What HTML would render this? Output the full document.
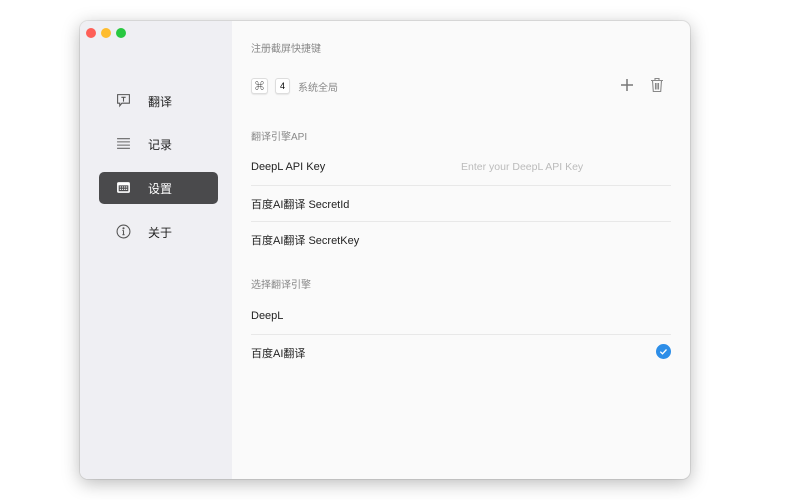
<!DOCTYPE html>
<html><head><meta charset="utf-8"><style>
*{margin:0;padding:0;box-sizing:border-box}
body{width:800px;height:500px;background:#fff;font-family:"Liberation Sans","Noto Sans CJK SC",sans-serif;position:relative;overflow:hidden}
.win{position:absolute;left:80px;top:21px;width:610px;height:458px;border-radius:8px;overflow:hidden;background:#fafafa;box-shadow:0 4px 18px rgba(0,0,0,.28),0 0 0 1px rgba(0,0,0,.08)}
.side{position:absolute;left:0;top:0;width:152px;height:100%;background:#efeff3}
.dot{position:absolute;top:7px;width:10px;height:10px;border-radius:50%}
.item{position:absolute;left:19px;width:119px;height:32px;border-radius:5px;font-size:12px;color:#222}
.item .ic{position:absolute;left:17px;top:8px;width:15px;height:15px}
.item span{position:absolute;left:49px;top:8px}
.sel{background:#4a4a4c;color:#fff}
.t{position:absolute;font-size:11px;color:#222}
.g{color:#888;font-size:10px}
.sep{position:absolute;left:171px;width:420px;height:1px;background:#e8e8e8}
.key{position:absolute;top:57px;height:16px;border:1px solid #ddd;background:#fff;border-radius:3px;font-size:9px;text-align:center;line-height:14px;box-shadow:0 1px 1px rgba(0,0,0,.08)}
</style></head><body>
<div class="win">
<div class="side">
<div class="dot" style="left:6px;background:#fe5f57"></div>
<div class="dot" style="left:21px;background:#febc2e"></div>
<div class="dot" style="left:36px;background:#28c840"></div>
<div class="item" style="top:64px"><svg class="ic" viewBox="0 0 14 14" fill="none" stroke="#555" stroke-width="1"><path d="M1.5 1.5h11v8h-7l-2 2.5v-2.5h-2z"/><path d="M5 4h4M7 4v4"/></svg><span>翻译</span></div>
<div class="item" style="top:107px"><svg class="ic" viewBox="0 0 14 14" stroke="#666" stroke-width="1"><path d="M1 2.5h12M1 5.5h12M1 8.5h12M1 11.5h12"/></svg><span>记录</span></div>
<div class="item sel" style="top:151px"><svg class="ic" viewBox="0 0 14 14"><rect x="1" y="2" width="12" height="10" rx="1.5" fill="#fff"/><g fill="#4a4a4c"><rect x="2.5" y="5" width="9" height="5.5"/></g><g fill="#fff"><rect x="3.5" y="6" width="1.2" height="1"/><rect x="5.5" y="6" width="1.2" height="1"/><rect x="7.5" y="6" width="1.2" height="1"/><rect x="9.3" y="6" width="1.2" height="1"/><rect x="3.5" y="8.2" width="1.2" height="1"/><rect x="5.5" y="8.2" width="1.2" height="1"/><rect x="7.5" y="8.2" width="1.2" height="1"/><rect x="9.3" y="8.2" width="1.2" height="1"/></g></svg><span>设置</span></div>
<div class="item" style="top:195px"><svg class="ic" viewBox="0 0 14 14" fill="none" stroke="#555" stroke-width="1"><circle cx="7" cy="7" r="6"/><path d="M7 6v4M6 10h2M6 6h1"/><circle cx="7" cy="4" r=".5" fill="#555"/></svg><span>关于</span></div>
</div>
<div class="t g" style="left:171px;top:19px">注册截屏快捷键</div>
<div class="key" style="left:171px;width:17px">⌘</div>
<div class="key" style="left:195px;width:15px">4</div>
<div class="t g" style="left:218px;top:58px">系统全局</div>
<svg style="position:absolute;left:540px;top:57px" width="14" height="14" stroke="#777" stroke-width="1.5"><path d="M7 1v12M1 7h12"/></svg>
<svg style="position:absolute;left:570px;top:56px" width="14" height="16" fill="none" stroke="#888" stroke-width="1.1"><path d="M1 3.5h12M5 3.5V1.5h4v2M2.5 3.5l.8 11h7.4l.8-11M5.5 6v6.5M7 6v6.5M8.5 6v6.5"/></svg>
<div class="t g" style="left:171px;top:107px">翻译引擎API</div>
<div class="t" style="left:171px;top:140px">DeepL API Key</div>
<div class="t" style="left:381px;top:140px;color:#bbb;font-size:10.5px">Enter your DeepL API Key</div>
<div class="sep" style="top:164px"></div>
<div class="t" style="left:171px;top:175px">百度AI翻译 SecretId</div>
<div class="sep" style="top:200px"></div>
<div class="t" style="left:171px;top:211px">百度AI翻译 SecretKey</div>
<div class="t g" style="left:171px;top:255px">选择翻译引擎</div>
<div class="t" style="left:171px;top:289px">DeepL</div>
<div class="sep" style="top:313px"></div>
<div class="t" style="left:171px;top:324px">百度AI翻译</div>
<svg style="position:absolute;left:576px;top:323px" width="15" height="15"><circle cx="7.5" cy="7.5" r="7.5" fill="#2d8ee8"/><path d="M4.3 7.7l2.2 2.1 4-4.3" fill="none" stroke="#fff" stroke-width="1.3"/></svg>
</div>
</body></html>
